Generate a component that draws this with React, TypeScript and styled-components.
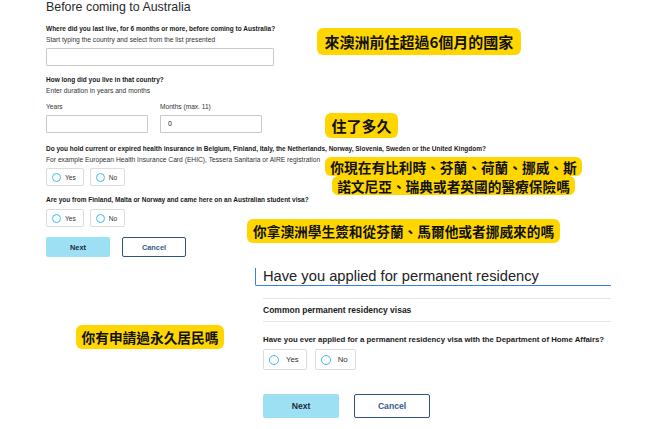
import styled, { createGlobalStyle } from "styled-components";

type V = 1 | 2;

const sizes = {
    1: { q: 6.5, hint: 6.7, lh: 10, optH: 18, circle: 9, opt: 6.6, optGap: 4, groupGap: 6, btnW: 64, btnH: 20, btn: 7.4, btnGap: 12 },
    2: { q: 7.8, hint: 8, lh: 11, optH: 21, circle: 10, opt: 7.8, optGap: 7, groupGap: 8, btnW: 76, btnH: 24, btn: 8.6, btnGap: 15 },
};

const GlobalStyle = createGlobalStyle`
    html, body {
        margin: 0;
        padding: 0;
        background: #fff;
    }
    body {
        font-family: "Liberation Sans", Arial, sans-serif;
        color: #1b1b1b;
    }
    * {
        box-sizing: border-box;
    }
`;

const RadioGroup = ({ v, mt }: { v: V; mt: number }) => (
    <Options $v={v} $mt={mt}>
        <Option $v={v}>
            <Circle $v={v} />
            Yes
        </Option>
        <Option $v={v}>
            <Circle $v={v} />
            No
        </Option>
    </Options>
);

const Actions = ({ v, mt }: { v: V; mt: number }) => (
    <ButtonRow $v={v} $mt={mt}>
        <NextButton $v={v}>Next</NextButton>
        <CancelButton $v={v}>Cancel</CancelButton>
    </ButtonRow>
);

export default function App() {
    return (
        <Page>
            <GlobalStyle />
            <Sheet>
                <Title>Before coming to Australia</Title>
                <Question $v={1} $mt={10}>Where did you last live, for 6 months or more, before coming to Australia?</Question>
                <Hint $v={1}>Start typing the country and select from the list presented</Hint>
                <TextInput $w={228} $mt={3} />

                <Question $v={1} $mt={9}>How long did you live in that country?</Question>
                <Hint $v={1}>Enter duration in years and months</Hint>
                <FieldRow>
                    <Field>
                        <FieldLabel>Years</FieldLabel>
                        <TextInput $w={102} $mt={3} />
                    </Field>
                    <Field>
                        <FieldLabel>Months (max. 11)</FieldLabel>
                        <TextInput $w={102} $mt={3}>0</TextInput>
                    </Field>
                </FieldRow>

                <Question $v={1} $mt={11}>
                    Do you hold current or expired health insurance in Belgium, Finland, Italy, the Netherlands, Norway, Slovenia, Sweden or the United Kingdom?
                </Question>
                <Hint $v={1}>For example European Health Insurance Card (EHIC), Tessera Sanitaria or AIRE registration</Hint>
                <RadioGroup v={1} mt={3} />

                <Question $v={1} $mt={9}>Are you from Finland, Malta or Norway and came here on an Australian student visa?</Question>
                <RadioGroup v={1} mt={4} />

                <Actions v={1} mt={10} />
            </Sheet>

            <Sheet2>
                <FocusHeading>Have you applied for permanent residency</FocusHeading>
                <Divider $mt={12} />
                <SectionTitle>Common permanent residency visas</SectionTitle>
                <Divider $mt={5} />
                <Inset>
                    <Question $v={2} $mt={12}>Have you ever applied for a permanent residency visa with the Department of Home Affairs?</Question>
                    <RadioGroup v={2} mt={4} />
                    <Actions v={2} mt={24} />
                </Inset>
            </Sheet2>

            <Note $x={317} $y={28} $h={27} $size={15} $pad={7.5}>來澳洲前住超過6個月的國家</Note>
            <Note $x={325} $y={113} $h={25} $size={15} $pad={6.5}>住了多久</Note>
            <NoteStack $x={325} $y={157}>
                <NoteLine>你現在有比利時、芬蘭、荷蘭、挪威、斯</NoteLine>
                <NoteLine>諾文尼亞、瑞典或者英國的醫療保險嗎</NoteLine>
            </NoteStack>
            <Note $x={247} $y={219} $h={24} $size={13.7} $pad={6}>你拿澳洲學生簽和從芬蘭、馬爾他或者挪威來的嗎</Note>
            <Note $x={76} $y={325} $h={24} $size={13.7} $pad={5.5}>你有申請過永久居民嗎</Note>
        </Page>
    );
}

const Page = styled.div`
    position: relative;
    width: 650px;
    height: 429px;
    overflow: hidden;
    background: #fff;
`;

const Sheet = styled.div`
    display: flex;
    flex-direction: column;
    align-items: flex-start;
    padding-left: 46px;
`;

const Title = styled.h1`
    margin: 0;
    font-size: 12.4px;
    line-height: 14px;
    font-weight: 400;
    color: #2a2a2a;
`;

const Question = styled.p<{ $v: V; $mt: number }>`
    margin: ${(p) => p.$mt}px 0 0;
    font-size: ${(p) => sizes[p.$v].q}px;
    line-height: ${(p) => sizes[p.$v].lh}px;
    font-weight: 700;
    color: #1a1a1a;
    white-space: nowrap;
`;

const Hint = styled.p<{ $v: V }>`
    margin: 1px 0 0;
    font-size: ${(p) => sizes[p.$v].hint}px;
    line-height: ${(p) => sizes[p.$v].lh}px;
    color: #333;
    white-space: nowrap;
`;

const TextInput = styled.div<{ $w: number; $mt: number }>`
    width: ${(p) => p.$w}px;
    height: 18px;
    margin-top: ${(p) => p.$mt}px;
    border: 1px solid #c9c9c9;
    border-radius: 1px;
    padding-left: 7px;
    font-size: 7px;
    line-height: 16px;
    color: #222;
`;

const FieldRow = styled.div`
    display: flex;
    gap: 12px;
    margin-top: 6px;
`;

const Field = styled.div`
    display: flex;
    flex-direction: column;
`;

const FieldLabel = styled.span`
    font-size: 6.6px;
    line-height: 10px;
    color: #333;
`;

const Options = styled.div<{ $v: V; $mt: number }>`
    display: flex;
    gap: ${(p) => sizes[p.$v].groupGap}px;
    margin-top: ${(p) => p.$mt}px;
`;

const Option = styled.div<{ $v: V }>`
    display: flex;
    align-items: center;
    gap: ${(p) => sizes[p.$v].optGap}px;
    height: ${(p) => sizes[p.$v].optH}px;
    padding: 0 7px 0 5px;
    border: 1px solid #dcdcdc;
    border-radius: 2px;
    font-size: ${(p) => sizes[p.$v].opt}px;
    color: #333;
`;

const Circle = styled.span<{ $v: V }>`
    width: ${(p) => sizes[p.$v].circle}px;
    height: ${(p) => sizes[p.$v].circle}px;
    border: 1px solid #3dbdee;
    border-radius: 50%;
    flex-shrink: 0;
`;

const ButtonRow = styled.div<{ $v: V; $mt: number }>`
    display: flex;
    gap: ${(p) => sizes[p.$v].btnGap}px;
    margin-top: ${(p) => p.$mt}px;
`;

const NextButton = styled.button<{ $v: V }>`
    width: ${(p) => sizes[p.$v].btnW}px;
    height: ${(p) => sizes[p.$v].btnH}px;
    padding: 0;
    border: none;
    border-radius: 2px;
    background: #9de0f3;
    font-family: "Liberation Sans", Arial, sans-serif;
    font-size: ${(p) => sizes[p.$v].btn}px;
    font-weight: 700;
    color: #1e2b3a;
`;

const CancelButton = styled(NextButton)`
    background: #fff;
    border: 1px solid #2f5184;
    color: #3a5a8c;
`;

const Sheet2 = styled.div`
    display: flex;
    flex-direction: column;
    width: 356px;
    margin: 11px 0 0 255px;
`;

const FocusHeading = styled.h2`
    margin: 0;
    height: 18px;
    padding-left: 7px;
    border-left: 1px solid #3a7fd8;
    border-bottom: 1px solid #3a7fd8;
    border-bottom-left-radius: 2px;
    font-size: 14.7px;
    line-height: 17px;
    font-weight: 400;
    color: #222;
    white-space: nowrap;
`;

const Divider = styled.hr<{ $mt: number }>`
    margin: ${(p) => p.$mt}px 0 0 8px;
    border: none;
    border-top: 1px solid #e4e4e4;
    height: 0;
`;

const SectionTitle = styled.h3`
    margin: 5px 0 0 8px;
    font-size: 8.5px;
    line-height: 12px;
    font-weight: 700;
    color: #1a1a1a;
`;

const Inset = styled.div`
    display: flex;
    flex-direction: column;
    align-items: flex-start;
    padding-left: 8px;
`;

const Note = styled.div<{ $x: number; $y: number; $h: number; $size: number; $pad: number }>`
    position: absolute;
    left: ${(p) => p.$x}px;
    top: ${(p) => p.$y}px;
    height: ${(p) => p.$h}px;
    display: flex;
    align-items: center;
    padding: 0 ${(p) => p.$pad}px;
    border-radius: 6px;
    background: #ffd600;
    font-family: "Noto Sans CJK TC", "Noto Sans CJK SC", sans-serif;
    font-size: ${(p) => p.$size}px;
    font-weight: 700;
    color: #111;
    white-space: nowrap;
`;

const NoteStack = styled.div<{ $x: number; $y: number }>`
    position: absolute;
    left: ${(p) => p.$x}px;
    top: ${(p) => p.$y}px;
    width: 257px;
    display: flex;
    flex-direction: column;
    align-items: center;
`;

const NoteLine = styled.span`
    height: 19px;
    display: flex;
    align-items: center;
    padding: 0 5.5px;
    border-radius: 6px;
    background: #ffd600;
    font-family: "Noto Sans CJK TC", "Noto Sans CJK SC", sans-serif;
    font-size: 13.7px;
    font-weight: 700;
    color: #111;
    white-space: nowrap;
`;
